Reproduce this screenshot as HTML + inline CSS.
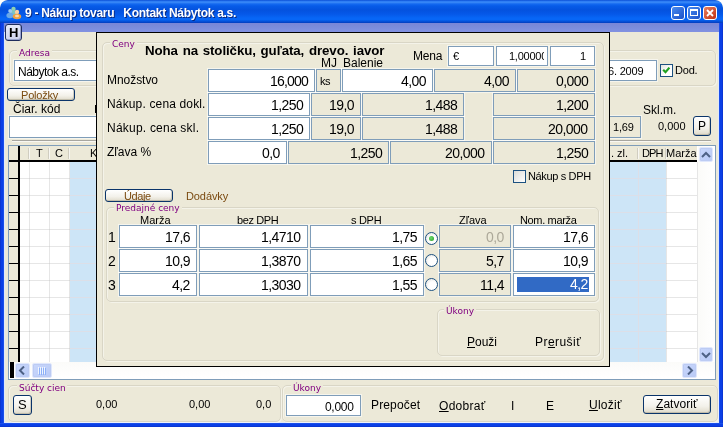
<!DOCTYPE html>
<html><head><meta charset="utf-8"><title>9 - Nákup tovaru</title>
<style>
html,body{margin:0;padding:0;}
body{width:723px;height:427px;overflow:hidden;background:#fff;font-family:"Liberation Sans",sans-serif;font-size:13px;color:#000;position:relative;}
#w{position:absolute;left:0;top:0;width:723px;height:427px;overflow:hidden;background:#ece9d8;border-radius:8px 8px 0 0;}
.a{position:absolute;white-space:nowrap;}
.t{will-change:transform;position:absolute;white-space:nowrap;line-height:1;}
.f{position:absolute;box-sizing:border-box;border:1px solid #7f9db9;box-shadow:0 0 0 1px rgba(255,255,255,.55);background:#fff;font-size:14px;letter-spacing:-0.55px;text-align:right;white-space:nowrap;overflow:hidden;}
.f.ro{background:#ece9d8;}
.f span{will-change:transform;position:absolute;right:6px;top:2.5px;line-height:16px;}
.gb{position:absolute;box-sizing:border-box;border:1px solid #d9d6c6;border-radius:5px;box-shadow:inset 1px 1px 0 rgba(255,255,255,.45),1px 1px 0 rgba(255,255,255,.45);}
.gl{position:absolute;white-space:nowrap;line-height:1;color:#800080;font-size:9px;font-family:"DejaVu Sans","Liberation Sans",sans-serif;background:#ece9d8;padding:0 2px;}
.btn{position:absolute;box-sizing:border-box;border:1px solid #0a346a;border-radius:3px;background:linear-gradient(#fff,#f3f1ea 60%,#e4e0d2 90%,#d3cdbf);box-shadow:inset -1px -1px 0 rgba(170,165,145,.5);text-align:center;white-space:nowrap;}
u{text-decoration:underline;}
.g{will-change:transform;display:inline-block;}
</style></head><body>
<div id="w">
<!-- title bar -->
<div class="a" id="tb" style="left:0;top:0;width:723px;height:23px;background:linear-gradient(#0a4fd6 0px,#2f7ef4 1.5px,#3585f6 2.5px,#1469f0 4px,#075be8 6px,#0452de 10px,#0558e8 14px,#0766f6 18px,#0766f6 19.5px,#0556e0 21px,#0342c6 22.5px,#0342c6 23px);border-radius:7px 7px 0 0;"></div>
<div class="a" style="left:0;top:23px;width:723px;height:9px;background:linear-gradient(#7985d8,#7b8bda 40%,#8292e2);"></div>
<div class="a" style="left:0;top:23px;width:4px;height:404px;background:linear-gradient(90deg,#0a2cc0 0,#0a3fe6 1px,#0a3fe6 3px,#2a5ff0 4px);"></div><div class="a" style="left:4px;top:32px;width:1px;height:391px;background:#dfe8fa;"></div>
<div class="a" style="left:719px;top:23px;width:4px;height:404px;background:linear-gradient(270deg,#0a2cc0 0,#0a3fe6 1px,#0a3fe6 3px,#2a5ff0 4px);"></div><div class="a" style="left:718px;top:32px;width:1px;height:391px;background:#dfe8fa;"></div>
<div class="a" style="left:4px;top:422px;width:715px;height:1px;background:#dfe8fa;"></div><div class="a" style="left:0;top:423px;width:723px;height:4px;background:linear-gradient(#2a5ff0 0,#0a3fe6 1px,#0a3fe6 3px,#0a2cc0 4px);"></div>
<!-- app icon -->
<svg class="a" style="left:6px;top:6px" width="17" height="14" viewBox="0 0 17 14"><circle cx="7.5" cy="3" r="2.2" fill="#8fd0b0"/><ellipse cx="7.5" cy="7.5" rx="3.8" ry="3" fill="#7cc4c0"/><circle cx="4.2" cy="5" r="2" fill="#9cc8f0"/><ellipse cx="4" cy="9.5" rx="3.6" ry="2.8" fill="#6aa8e8"/><circle cx="11" cy="6" r="2.2" fill="#f8d0a0"/><ellipse cx="11" cy="10.5" rx="4.2" ry="2.8" fill="#f0a040"/><ellipse cx="11" cy="10" rx="2" ry="1.2" fill="#fbd9a8"/></svg>
<div class="t" style="left:25px;top:7px;font-size:12px;letter-spacing:-0.3px;font-weight:bold;color:#fff;text-shadow:1px 1px 0 #0a2a80;">9 - Nákup tovaru &nbsp; Kontakt Nábytok a.s.</div>
<!-- caption buttons -->
<div class="a cb" style="left:671px;top:6px;width:14px;height:14px;box-sizing:border-box;border:1px solid #fff;border-radius:3px;background:linear-gradient(135deg,#4a8cf0,#1c50c8);"></div>
<div class="a cb" style="left:687px;top:6px;width:14px;height:14px;box-sizing:border-box;border:1px solid #fff;border-radius:3px;background:linear-gradient(135deg,#4a8cf0,#1c50c8);"></div>
<div class="a cb" style="left:703px;top:6px;width:14px;height:14px;box-sizing:border-box;border:1px solid #fff;border-radius:3px;background:linear-gradient(135deg,#e88060,#c03010);"></div>
<div class="a" style="left:674px;top:14px;width:5px;height:2px;background:#fff;"></div>
<div class="a" style="left:690px;top:9px;width:8px;height:7px;box-sizing:border-box;border:1px solid #fff;border-top-width:2px;"></div>
<svg class="a" style="left:706px;top:9px" width="8" height="8" viewBox="0 0 8 8"><path d="M1 1L7 7M7 1L1 7" stroke="#fff" stroke-width="1.8"/></svg>
<!-- H button -->
<div class="btn" style="left:5px;top:24px;width:17px;height:17px;font-weight:bold;font-size:13px;line-height:15px;background:linear-gradient(#e6e9f8,#cfd4ee);border-color:#1f2d5c;box-shadow:inset -1px -1px 0 #9aa4cf;"><span class="g">H</span></div>

<!-- background form -->
<div class="gb" style="left:9px;top:50px;width:707px;height:36px;"></div>
<div class="gl" style="left:17px;top:49px;"><span class="g">Adresa</span></div>
<div class="f" style="left:14px;top:60px;width:200px;height:21px;text-align:left;"><span style="left:2.5px;right:auto;font-size:12px;letter-spacing:-0.5px;">Nábytok a.s.</span></div>
<div class="f" style="left:560px;top:60px;width:96.5px;height:21px;"><span style="font-size:11px;right:12px;top:1.6px;letter-spacing:-0.2px;">6. 2009</span></div>
<div class="a" style="left:660px;top:64px;width:13px;height:13px;box-sizing:border-box;border:1px solid #1c5180;background:linear-gradient(135deg,#e4e4df,#fff 60%);"></div>
<svg class="a" style="left:662px;top:66px" width="9" height="9" viewBox="0 0 9 9"><path d="M1.2 3.8L3.5 6.2L7.4 1.6" stroke="#21a121" stroke-width="2.2" fill="none"/></svg>
<div class="t" style="left:675px;top:65px;font-size:11px;letter-spacing:-0.2px;">Dod.</div>

<div class="btn" style="left:7px;top:88px;width:68px;height:13px;font-size:11px;line-height:12px;color:#7a4a10;overflow:hidden;padding-right:2px;"><span class="g" style="letter-spacing:-0.2px;">Položky</span></div>
<div class="t" style="left:12.5px;top:103px;font-size:12px;">Čiar. kód</div>
<div class="a" style="left:95px;top:105px;width:1px;height:8px;background:#000;"></div>
<div class="a" style="left:12px;top:140px;width:699px;height:1px;background:#a7a6a0;"></div><div class="a" style="left:12px;top:141px;width:699px;height:1px;background:#f8f7f2;"></div>
<div class="f" style="left:9px;top:116px;width:200px;height:22px;"></div>
<div class="t" style="left:642.5px;top:104px;font-size:12px;">Skl.m.</div>
<div class="f ro" style="left:580px;top:116px;width:61px;height:22px;"><span style="font-size:11px;right:6.5px;top:2px;letter-spacing:-0.2px;">1,69</span></div>
<div class="t" style="left:657.5px;top:121px;font-size:11px;letter-spacing:0;">0,000</div>
<div class="btn" style="left:693px;top:116px;width:18px;height:20px;font-size:12px;line-height:18px;"><span class="g">P</span></div>

<!-- grid -->
<div class="a" id="grid" style="left:8px;top:145px;width:708px;height:235px;box-sizing:border-box;border:1px solid #7f9db9;background:#fff;overflow:hidden;"></div>
<div class="a" style="left:20px;top:178px;width:677px;height:1px;background:rgba(195,195,195,.42);"></div>
<div class="a" style="left:9px;top:178px;width:10px;height:1px;background:#000;"></div>
<div class="a" style="left:20px;top:195px;width:677px;height:1px;background:rgba(195,195,195,.42);"></div>
<div class="a" style="left:9px;top:195px;width:10px;height:1px;background:#000;"></div>
<div class="a" style="left:20px;top:212px;width:677px;height:1px;background:rgba(195,195,195,.42);"></div>
<div class="a" style="left:9px;top:212px;width:10px;height:1px;background:#000;"></div>
<div class="a" style="left:20px;top:229px;width:677px;height:1px;background:rgba(195,195,195,.42);"></div>
<div class="a" style="left:9px;top:229px;width:10px;height:1px;background:#000;"></div>
<div class="a" style="left:20px;top:246px;width:677px;height:1px;background:rgba(195,195,195,.42);"></div>
<div class="a" style="left:9px;top:246px;width:10px;height:1px;background:#000;"></div>
<div class="a" style="left:20px;top:263px;width:677px;height:1px;background:rgba(195,195,195,.42);"></div>
<div class="a" style="left:9px;top:263px;width:10px;height:1px;background:#000;"></div>
<div class="a" style="left:20px;top:280px;width:677px;height:1px;background:rgba(195,195,195,.42);"></div>
<div class="a" style="left:9px;top:280px;width:10px;height:1px;background:#000;"></div>
<div class="a" style="left:20px;top:297px;width:677px;height:1px;background:rgba(195,195,195,.42);"></div>
<div class="a" style="left:9px;top:297px;width:10px;height:1px;background:#000;"></div>
<div class="a" style="left:20px;top:314px;width:677px;height:1px;background:rgba(195,195,195,.42);"></div>
<div class="a" style="left:9px;top:314px;width:10px;height:1px;background:#000;"></div>
<div class="a" style="left:20px;top:331px;width:677px;height:1px;background:rgba(195,195,195,.42);"></div>
<div class="a" style="left:9px;top:331px;width:10px;height:1px;background:#000;"></div>
<div class="a" style="left:20px;top:348px;width:677px;height:1px;background:rgba(195,195,195,.42);"></div>
<div class="a" style="left:9px;top:348px;width:10px;height:1px;background:#000;"></div>
<div class="a" style="left:29px;top:162px;width:1px;height:200px;background:rgba(195,195,195,.42);"></div>
<div class="a" style="left:49px;top:162px;width:1px;height:200px;background:rgba(195,195,195,.42);"></div>
<div class="a" style="left:69px;top:162px;width:1px;height:200px;background:rgba(195,195,195,.42);"></div>
<div class="a" style="left:638px;top:162px;width:1px;height:200px;background:rgba(195,195,195,.42);"></div>
<div class="a" style="left:666px;top:162px;width:1px;height:200px;background:rgba(195,195,195,.42);"></div>
<div class="a" style="left:697px;top:162px;width:1px;height:200px;background:rgba(195,195,195,.42);"></div>
<div class="a" style="left:70px;top:162px;width:30px;height:200px;background:#cde5f7 repeating-linear-gradient(to bottom,transparent 0,transparent 16px,#dcdfe8 16px,#dcdfe8 17px);"></div>
<div class="a" style="left:605px;top:162px;width:61px;height:200px;background:#cde5f7 repeating-linear-gradient(to bottom,transparent 0,transparent 16px,#dcdfe8 16px,#dcdfe8 17px);"></div>
<div class="a" style="left:638px;top:162px;width:1px;height:200px;background:#dcdfe8;"></div>
<div class="a" style="left:9px;top:146px;width:9px;height:216px;background:#ece9d8;z-index:0;"></div>
<div class="a" style="left:9px;top:178px;width:10px;height:1px;background:#000;"></div>
<div class="a" style="left:9px;top:195px;width:10px;height:1px;background:#000;"></div>
<div class="a" style="left:9px;top:212px;width:10px;height:1px;background:#000;"></div>
<div class="a" style="left:9px;top:229px;width:10px;height:1px;background:#000;"></div>
<div class="a" style="left:9px;top:246px;width:10px;height:1px;background:#000;"></div>
<div class="a" style="left:9px;top:263px;width:10px;height:1px;background:#000;"></div>
<div class="a" style="left:9px;top:280px;width:10px;height:1px;background:#000;"></div>
<div class="a" style="left:9px;top:297px;width:10px;height:1px;background:#000;"></div>
<div class="a" style="left:9px;top:314px;width:10px;height:1px;background:#000;"></div>
<div class="a" style="left:9px;top:331px;width:10px;height:1px;background:#000;"></div>
<div class="a" style="left:9px;top:348px;width:10px;height:1px;background:#000;"></div>
<div class="a" style="left:17.5px;top:146px;width:2px;height:216px;background:#000;"></div>
<div class="a" style="left:20px;top:146px;width:677px;height:15px;background:#ece9d8;"></div>
<div class="a" style="left:9px;top:160.4px;width:688px;height:1.6px;background:#000;"></div>
<div class="a" style="left:28px;top:148px;width:1px;height:11px;background:#d0cdc0;"></div><div class="a" style="left:29px;top:148px;width:1px;height:11px;background:#f8f7f2;"></div>
<div class="a" style="left:48px;top:148px;width:1px;height:11px;background:#d0cdc0;"></div><div class="a" style="left:49px;top:148px;width:1px;height:11px;background:#f8f7f2;"></div>
<div class="a" style="left:68px;top:148px;width:1px;height:11px;background:#d0cdc0;"></div><div class="a" style="left:69px;top:148px;width:1px;height:11px;background:#f8f7f2;"></div>
<div class="a" style="left:637px;top:148px;width:1px;height:11px;background:#d0cdc0;"></div><div class="a" style="left:638px;top:148px;width:1px;height:11px;background:#f8f7f2;"></div>
<div class="a" style="left:665px;top:148px;width:1px;height:11px;background:#d0cdc0;"></div><div class="a" style="left:666px;top:148px;width:1px;height:11px;background:#f8f7f2;"></div>
<div class="t" style="left:36px;top:148px;font-size:11px;">T</div>
<div class="t" style="left:55px;top:148px;font-size:11px;">C</div>
<div class="t" style="left:90px;top:148px;font-size:11px;">K</div>
<div class="t" style="left:611px;top:148px;font-size:11px;">. zl.</div>
<div class="t" style="left:641.5px;top:148px;font-size:11px;letter-spacing:-0.9px;">DPH</div>
<div class="t" style="left:666px;top:148px;font-size:11px;">Marža</div>
<div class="a" style="left:9px;top:362px;width:706px;height:16px;background:linear-gradient(#fbfbf9,#fff);"></div>
<div class="a" style="left:698px;top:146px;width:17px;height:216px;background:linear-gradient(90deg,#fbfbf9,#fff);"></div>
<div class="a" style="left:10px;top:362px;width:4px;height:16px;background:#000;"></div>
<div class="a" style="left:15px;top:363px;width:15px;height:15px;box-sizing:border-box;border:1px solid #dfe7fc;border-radius:2px;background:linear-gradient(135deg,#c9d7fc,#b8caf6);box-shadow:0 0 0 1px #bccbf3 inset;"></div>
<div class="a" style="left:32px;top:363px;width:20px;height:15px;box-sizing:border-box;border:1px solid #dfe7fc;border-radius:2px;background:linear-gradient(135deg,#c9d7fc,#b8caf6);box-shadow:0 0 0 1px #bccbf3 inset;"></div>
<div class="a" style="left:682px;top:363px;width:15px;height:15px;box-sizing:border-box;border:1px solid #dfe7fc;border-radius:2px;background:linear-gradient(135deg,#c9d7fc,#b8caf6);box-shadow:0 0 0 1px #bccbf3 inset;"></div>
<div class="a" style="left:699px;top:147px;width:14px;height:15px;box-sizing:border-box;border:1px solid #dfe7fc;border-radius:2px;background:linear-gradient(135deg,#c9d7fc,#b8caf6);box-shadow:0 0 0 1px #bccbf3 inset;"></div>
<div class="a" style="left:699px;top:347px;width:14px;height:15px;box-sizing:border-box;border:1px solid #dfe7fc;border-radius:2px;background:linear-gradient(135deg,#c9d7fc,#b8caf6);box-shadow:0 0 0 1px #bccbf3 inset;"></div>
<svg class="a" style="left:18px;top:366px" width="8" height="9" viewBox="0 0 8 9"><path d="M6 0.5L2 4.5L6 8.5" stroke="#4d6185" stroke-width="2" fill="none"/></svg>
<svg class="a" style="left:686px;top:366px" width="8" height="9" viewBox="0 0 8 9"><path d="M2 0.5L6 4.5L2 8.5" stroke="#4d6185" stroke-width="2" fill="none"/></svg>
<svg class="a" style="left:701px;top:151px" width="10" height="8" viewBox="0 0 10 8"><path d="M1 6L5 2L9 6" stroke="#4d6185" stroke-width="2" fill="none"/></svg>
<svg class="a" style="left:701px;top:351px" width="10" height="8" viewBox="0 0 10 8"><path d="M1 2L5 6L9 2" stroke="#4d6185" stroke-width="2" fill="none"/></svg>
<div class="a" style="left:38px;top:367px;width:1px;height:7px;background:#eef4fe;box-shadow:1px 1px 0 #8cb0f8;"></div>
<div class="a" style="left:40px;top:367px;width:1px;height:7px;background:#eef4fe;box-shadow:1px 1px 0 #8cb0f8;"></div>
<div class="a" style="left:42px;top:367px;width:1px;height:7px;background:#eef4fe;box-shadow:1px 1px 0 #8cb0f8;"></div>
<div class="a" style="left:44px;top:367px;width:1px;height:7px;background:#eef4fe;box-shadow:1px 1px 0 #8cb0f8;"></div>
<!-- bottom groups -->
<div class="gb" style="left:8px;top:385px;width:273px;height:37px;"></div>
<div class="gl" style="left:16.5px;top:384px;"><span class="g">Súčty cien</span></div>
<div class="btn" style="left:13px;top:395px;width:19px;height:20px;font-size:13px;line-height:18px;"><span class="g">S</span></div>
<div class="t" style="left:96px;top:399px;font-size:11px;">0,00</div>
<div class="t" style="left:189px;top:399px;font-size:11px;">0,00</div>
<div class="t" style="left:256px;top:399px;font-size:11px;">0,0</div>
<div class="gb" style="left:282px;top:385px;width:436px;height:37px;"></div>
<div class="gl" style="left:290.5px;top:384px;"><span class="g">Úkony</span></div>
<div class="f" style="left:286px;top:395px;width:75px;height:21px;"><span style="font-size:12px;right:6px;letter-spacing:-0.3px;top:2.5px;">0,000</span></div>
<div class="t" style="left:371px;top:399px;font-size:12px;letter-spacing:0.15px;">Prepočet</div>
<div class="t" style="left:439px;top:400px;font-size:12px;letter-spacing:0.3px;"><u>O</u>dobrať</div>
<div class="t" style="left:511px;top:400px;font-size:12px;">I</div>
<div class="t" style="left:546px;top:400px;font-size:12px;">E</div>
<div class="t" style="left:589px;top:399px;font-size:12px;letter-spacing:0.25px;"><u>U</u>ložiť</div>
<div class="btn" style="left:643px;top:395px;width:68px;height:19px;font-size:12px;line-height:17px;"><span class="g" style="letter-spacing:0.05px"><u>Z</u>atvoriť</span></div>

<!-- dialog -->
<div class="a" id="dlg" style="left:96px;top:32px;width:514px;height:335px;box-sizing:border-box;border:1px solid #000;background:#ece9d8;"></div>
<div class="gb" style="left:102px;top:42px;width:502px;height:319px;"></div>
<div class="gl" style="left:110px;top:40px;"><span class="g">Ceny</span></div>
<div class="t" id="hd" style="left:145px;top:43.5px;font-size:13.3px;letter-spacing:-0.1px;word-spacing:1.2px;font-weight:bold;">Noha na stoličku, guľata, drevo. iavor</div>
<div class="t" style="left:413px;top:50px;font-size:12px;letter-spacing:-0.2px;">Mena</div>
<div class="f" style="left:448px;top:46px;width:46px;height:20px;text-align:left;"><span style="left:4px;right:auto;font-size:11px;top:1.3px;">€</span></div>
<div class="f" style="left:496px;top:46px;width:52px;height:20px;"><span style="font-size:11px;right:auto;left:12px;top:1.3px;letter-spacing:-0.25px;display:block;width:34.5px;overflow:hidden;text-align:left;">1,00000</span></div>
<div class="f" style="left:550px;top:46px;width:45px;height:20px;"><span style="font-size:11px;right:8px;top:1.3px;">1</span></div>
<div class="t" style="left:320.5px;top:57px;font-size:12px;">MJ</div>
<div class="t" style="left:342.5px;top:57px;font-size:12px;">Balenie</div>
<div class="t" style="left:107px;top:74px;font-size:12px;letter-spacing:-0.05px;">Množstvo</div>
<div class="t" style="left:107px;top:98px;font-size:12px;letter-spacing:0.15px;">Nákup. cena dokl.</div>
<div class="t" style="left:107px;top:122px;font-size:12px;letter-spacing:0.22px;">Nákup. cena skl.</div>
<div class="t" style="left:107px;top:146px;font-size:12px;letter-spacing:0px;">Zľava %</div>
<div class="f" style="left:208px;top:69px;width:107px;height:23px;"><span style="letter-spacing:-0.8px">16,000</span></div>
<div class="f ro" style="left:316px;top:69px;width:25px;height:23px;text-align:left;"><span style="left:3px;right:auto;font-size:11px;">ks</span></div>
<div class="f" style="left:342px;top:69px;width:91px;height:23px;"><span style="">4,00</span></div>
<div class="f ro" style="left:434px;top:69px;width:82px;height:23px;"><span style="">4,00</span></div>
<div class="f ro" style="left:517px;top:69px;width:78px;height:23px;"><span style="">0,000</span></div>
<div class="f" style="left:208px;top:93px;width:102px;height:23px;"><span style="">1,250</span></div>
<div class="f ro" style="left:311px;top:93px;width:50px;height:23px;"><span style="">19,0</span></div>
<div class="f ro" style="left:362px;top:93px;width:102px;height:23px;"><span style="">1,488</span></div>
<div class="f ro" style="left:493px;top:93px;width:102px;height:23px;"><span style="">1,200</span></div>
<div class="f" style="left:208px;top:117px;width:102px;height:23px;"><span style="">1,250</span></div>
<div class="f ro" style="left:311px;top:117px;width:50px;height:23px;"><span style="">19,0</span></div>
<div class="f ro" style="left:362px;top:117px;width:102px;height:23px;"><span style="">1,488</span></div>
<div class="f ro" style="left:493px;top:117px;width:102px;height:23px;"><span style="">20,000</span></div>
<div class="f" style="left:208px;top:141px;width:79px;height:23px;"><span style="">0,0</span></div>
<div class="f ro" style="left:288px;top:141px;width:101px;height:23px;"><span style="">1,250</span></div>
<div class="f ro" style="left:390px;top:141px;width:102px;height:23px;"><span style="">20,000</span></div>
<div class="f ro" style="left:493px;top:141px;width:102px;height:23px;"><span style="">1,250</span></div>
<div class="a" style="left:513px;top:170px;width:13px;height:13px;box-sizing:border-box;border:1px solid #1c5180;background:linear-gradient(135deg,#dcdcd7,#fff);"></div>
<div class="t" style="left:528px;top:171px;font-size:11px;letter-spacing:-0.35px;">Nákup s DPH</div>
<div class="btn" style="left:105px;top:189px;width:68px;height:13px;font-size:11px;line-height:12px;color:#7a4a10;overflow:hidden;padding-right:3px;"><span class="g" style="letter-spacing:-0.4px"><u>Ú</u>daje</span></div>
<div class="t" style="left:186px;top:190.6px;font-size:11px;letter-spacing:-0.1px;color:#7a4a10;">Dodávky</div>
<div class="gb" style="left:106px;top:207px;width:493px;height:95px;"></div>
<div class="gl" style="left:114px;top:204px;"><span class="g">Predajné ceny</span></div>
<div class="t" style="left:140px;top:215px;font-size:11px;">Marža</div>
<div class="t" style="left:237px;top:215px;font-size:11px;letter-spacing:-0.4px;">bez DPH</div>
<div class="t" style="left:350.5px;top:215px;font-size:11px;letter-spacing:-0.3px;">s DPH</div>
<div class="t" style="left:459px;top:215px;font-size:11px;">Zľava</div>
<div class="t" style="left:520px;top:215px;font-size:11px;letter-spacing:-0.35px;">Nom. marža</div>
<div class="t" style="left:107.5px;top:230px;font-size:14px;">1</div>
<div class="f" style="left:119px;top:225px;width:78px;height:23px;"><span style="">17,6</span></div>
<div class="f" style="left:199px;top:225px;width:109px;height:23px;"><span style="">1,4710</span></div>
<div class="f" style="left:310px;top:225px;width:114px;height:23px;"><span style="">1,75</span></div>
<div class="a rd" style="left:425px;top:232px;width:13px;height:13px;box-sizing:border-box;border:1px solid #1c5180;border-radius:50%;background:radial-gradient(circle at 60% 60%,#fff 40%,#dcdcd7);"></div>
<div class="a" style="left:429px;top:236px;width:5px;height:5px;border-radius:50%;background:radial-gradient(circle at 40% 40%,#6fdc6f,#1f9a1f);"></div>
<div class="f ro" style="left:439px;top:225px;width:72px;height:23px;"><span style="color:#aca899;">0,0</span></div>
<div class="f" style="left:513px;top:225px;width:82px;height:23px;"><span style="">17,6</span></div>
<div class="t" style="left:107.5px;top:254px;font-size:14px;">2</div>
<div class="f" style="left:119px;top:249px;width:78px;height:23px;"><span style="">10,9</span></div>
<div class="f" style="left:199px;top:249px;width:109px;height:23px;"><span style="">1,3870</span></div>
<div class="f" style="left:310px;top:249px;width:114px;height:23px;"><span style="">1,65</span></div>
<div class="a rd" style="left:425px;top:254px;width:13px;height:13px;box-sizing:border-box;border:1px solid #1c5180;border-radius:50%;background:radial-gradient(circle at 60% 60%,#fff 40%,#dcdcd7);"></div>
<div class="f ro" style="left:439px;top:249px;width:72px;height:23px;"><span style="">5,7</span></div>
<div class="f" style="left:513px;top:249px;width:82px;height:23px;"><span style="">10,9</span></div>
<div class="t" style="left:107.5px;top:278px;font-size:14px;">3</div>
<div class="f" style="left:119px;top:273px;width:78px;height:23px;"><span style="">4,2</span></div>
<div class="f" style="left:199px;top:273px;width:109px;height:23px;"><span style="">1,3030</span></div>
<div class="f" style="left:310px;top:273px;width:114px;height:23px;"><span style="">1,55</span></div>
<div class="a rd" style="left:425px;top:278px;width:13px;height:13px;box-sizing:border-box;border:1px solid #1c5180;border-radius:50%;background:radial-gradient(circle at 60% 60%,#fff 40%,#dcdcd7);"></div>
<div class="f ro" style="left:439px;top:273px;width:72px;height:23px;"><span style="">11,4</span></div>
<div class="f" style="left:513px;top:273px;width:82px;height:23px;"><span style="color:#fff;background:#316ac5;right:5px;top:3px;padding:0 1px 0 53px;line-height:15px;">4,2</span></div>
<div class="gb" style="left:436.5px;top:309px;width:163px;height:47px;"></div>
<div class="gl" style="left:444px;top:307px;"><span class="g">Úkony</span></div>
<div class="t" style="left:467px;top:336px;font-size:12px;"><u>P</u>ouži</div>
<div class="t" style="left:535px;top:336px;font-size:12px;letter-spacing:0.45px;">Pr<u>e</u>rušiť</div>
</div>
</body></html>
